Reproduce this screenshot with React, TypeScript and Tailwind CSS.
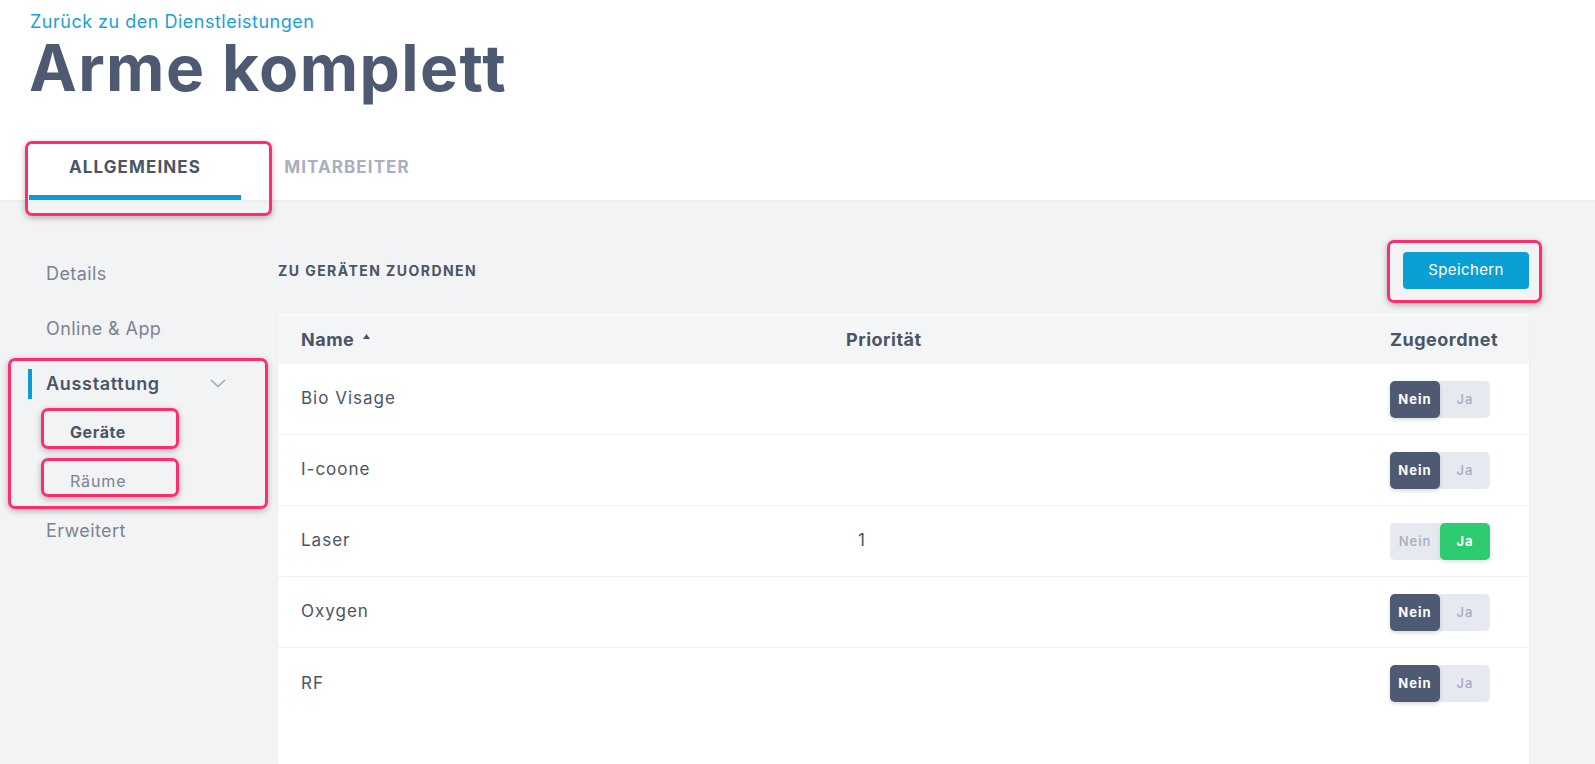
import { Fragment } from 'react';

type Row = { name: string; priority?: string; assigned: boolean };

const rows: Row[] = [
  { name: 'Bio Visage', assigned: false },
  { name: 'I-coone', assigned: false },
  { name: 'Laser', priority: '1', assigned: true },
  { name: 'Oxygen', assigned: false },
  { name: 'RF', assigned: false },
];

function Toggle({ on }: { on: boolean }) {
  return (
    <div className="flex h-[37px] w-[100px] rounded-[5px] bg-[#e6e9ef] text-[13px] leading-none">
      {on ? (
        <>
          <div className="flex w-1/2 items-center justify-center font-medium text-[#a3adbf]">Nein</div>
          <div className="flex w-1/2 items-center justify-center rounded-[5px] bg-[#2ecc71] font-bold text-white shadow-[0_2px_4px_rgba(0,0,0,0.12)]">Ja</div>
        </>
      ) : (
        <>
          <div className="flex w-1/2 items-center justify-center rounded-[5px] bg-[#4e5a72] font-bold text-white shadow-[0_2px_4px_rgba(0,0,0,0.15)]">Nein</div>
          <div className="flex w-1/2 items-center justify-center font-medium text-[#a3adbf]">Ja</div>
        </>
      )}
    </div>
  );
}

// pink annotation frames drawn over the screenshot
function Mark({ className }: { className: string }) {
  return (
    <div
      className={`pointer-events-none absolute rounded-[7px] border-[3px] border-[#ff2d6b] shadow-[0_2px_6px_rgba(0,0,0,0.28)] ${className}`}
    />
  );
}

export default function App() {
  return (
    <div className="relative flex h-[764px] w-full flex-col overflow-hidden bg-[#f2f3f5] font-['Inter',sans-serif] text-[#4a5568]">
      {/* Header */}
      <div className="bg-white pl-[29px] pt-[12px] shadow-[0_1px_3px_rgba(0,0,0,0.04)]">
        <div className="pl-[1px] text-[18px] leading-[20px] tracking-[0.5px] text-[#1b9fd9]">Zurück zu den Dienstleistungen</div>
        <h1 className="mt-[4px] text-[64px] font-bold leading-[64px] tracking-[1.4px] text-[#4e5a72]">Arme komplett</h1>
        <div className="mt-[55px] flex">
          <div className="w-[212px] border-b-[5px] border-[#0a9bd6] pb-[16px] text-center text-[17px] font-bold leading-[24px] tracking-[1.1px] text-[#4a5568]">
            ALLGEMEINES
          </div>
          <div className="w-[212px] border-b-[5px] border-transparent pb-[16px] text-center text-[17px] font-bold leading-[24px] tracking-[1.1px] text-[#a6b0c2]">
            MITARBEITER
          </div>
        </div>
      </div>

      {/* Body */}
      <div className="flex flex-1">
        {/* Sidebar */}
        <div className="w-[278px] shrink-0 pt-[46px] text-[18px] tracking-[0.4px]">
          <div className="flex h-[55px] items-center pl-[46px] text-[#7a8394]">Details</div>
          <div className="flex h-[55px] items-center pl-[46px] text-[#7a8394]">Online &amp; App</div>
          <div className="flex h-[55px] w-[226px] items-center">
            <div className="ml-[28px] h-[30px] w-[4px] bg-[#0a9bd6]" />
            <span className="ml-[14px] font-semibold tracking-[0.7px] text-[#4a5568]">Ausstattung</span>
            <svg className="ml-auto" width="16" height="9" viewBox="0 0 16 9" fill="none">
              <polyline points="1.5,1.5 8,7.5 14.5,1.5" stroke="#a3abb8" strokeWidth="1.7" strokeLinecap="round" strokeLinejoin="round" />
            </svg>
          </div>
          <div className="flex h-[42px] items-center pl-[70px] text-[16px] font-bold tracking-[0.6px] text-[#4a5568]">Geräte</div>
          <div className="flex h-[56px] items-center pl-[70px] text-[16px] tracking-[0.9px] text-[#7a8394]">Räume</div>
          <div className="flex h-[42px] items-center pl-[46px] text-[#7a8394]">Erweitert</div>
        </div>

        {/* Main */}
        <div className="flex flex-1 flex-col pr-[66px] pt-[52px]">
          <div className="flex h-[37px] items-center justify-between">
            <div className="text-[14px] font-bold tracking-[1.45px] text-[#4a5568]">ZU GERÄTEN ZUORDNEN</div>
            <button className="h-[37px] w-[126px] rounded-[4px] bg-[#0aa0d6] text-[15px] tracking-[0.4px] text-white">Speichern</button>
          </div>

          <div className="mt-[25px] flex flex-1 flex-col bg-white shadow-[0_0_2px_rgba(0,0,0,0.05)]">
            <div className="grid h-[50px] grid-cols-[545px_1fr_139px] items-center border-t border-white bg-[#f4f5f7] pl-[23px] text-[18px] font-bold tracking-[0.5px] text-[#4a5568]">
              <div className="flex items-center gap-[9px]">
                Name
                <svg width="7" height="5" viewBox="0 0 7 5" className="mb-[6px]">
                  <polygon points="3.5,0 7,5 0,5" fill="#4a5568" />
                </svg>
              </div>
              <div>Priorität</div>
              <div>Zugeordnet</div>
            </div>
            {rows.map((r, i) => (
              <Fragment key={r.name}>
                <div
                  className={`grid h-[71px] grid-cols-[545px_1fr_139px] items-center pl-[23px] text-[17px] tracking-[1px] text-[#4a5568] ${
                    i < rows.length - 1 ? 'border-b border-[#eef0f3]' : ''
                  }`}
                >
                  <div>{r.name}</div>
                  <div className="pl-[12px]">{r.priority ?? ''}</div>
                  <div>
                    <Toggle on={r.assigned} />
                  </div>
                </div>
              </Fragment>
            ))}
          </div>
        </div>
      </div>

      <Mark className="left-[25px] top-[141px] h-[75px] w-[247px]" />
      <Mark className="left-[8px] top-[358px] h-[151px] w-[260px]" />
      <Mark className="left-[41px] top-[408px] h-[41px] w-[138px]" />
      <Mark className="left-[41px] top-[458px] h-[39px] w-[138px]" />
      <Mark className="left-[1387px] top-[240px] h-[63px] w-[155px]" />
    </div>
  );
}
